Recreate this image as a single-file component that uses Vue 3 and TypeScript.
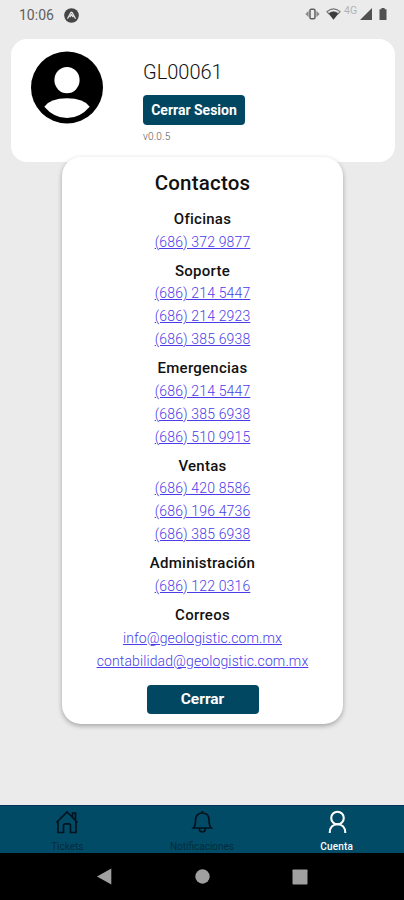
<script setup lang="ts">
interface ContactGroup {
  title: string
  scheme: 'tel' | 'mailto'
  entries: string[]
}

const groups: ContactGroup[] = [
  { title: 'Oficinas', scheme: 'tel', entries: ['(686) 372 9877'] },
  { title: 'Soporte', scheme: 'tel', entries: ['(686) 214 5447', '(686) 214 2923', '(686) 385 6938'] },
  { title: 'Emergencias', scheme: 'tel', entries: ['(686) 214 5447', '(686) 385 6938', '(686) 510 9915'] },
  { title: 'Ventas', scheme: 'tel', entries: ['(686) 420 8586', '(686) 196 4736', '(686) 385 6938'] },
  { title: 'Administración', scheme: 'tel', entries: ['(686) 122 0316'] },
  { title: 'Correos', scheme: 'mailto', entries: ['info@geologistic.com.mx', 'contabilidad@geologistic.com.mx'] },
]

const href = (group: ContactGroup, entry: string): string =>
  group.scheme === 'tel' ? `tel:${entry.replace(/\D/g, '')}` : `mailto:${entry}`
</script>

<template>
  <div class="screen">
    <header class="status">
      <span class="clock">10:06</span>
      <svg class="app-mark" width="15" height="15" viewBox="0 0 15 15">
        <circle cx="7.5" cy="7.5" r="7.3" fill="#454545" />
        <path d="M3.7 10.2 6.8 4.7Q7.5 3.8 8.2 4.7L11.3 10.2M6.1 8.7 7.5 6.6 8.9 8.7" fill="none" stroke="#e4e4e4" stroke-width="1.3" stroke-linecap="round" />
      </svg>
      <div class="indicators">
        <svg width="15" height="12" viewBox="0 0 15 12">
          <rect x="5" y="1.2" width="5" height="9.6" rx="1.2" fill="none" stroke="#606060" stroke-width="1.5" />
          <path d="M3.6 2.8.4 6 3.6 9.2ZM11.4 2.8 14.6 6 11.4 9.2Z" fill="#8a8a8a" />
        </svg>
        <svg class="wifi" width="15" height="12" viewBox="0 0 15 12">
          <path d="M.9 3.6Q7.5-1.8 14.1 3.6L12.3 5.7Q7.5 1.7 2.7 5.7Z" fill="none" stroke="#777" stroke-width="1.1" />
          <path d="M2.7 5.7Q7.5 1.8 12.3 5.7L7.5 11.8Z" fill="#3c3c3c" />
        </svg>
        <span class="network">4G</span>
        <svg class="signal" width="12" height="12" viewBox="0 0 12 12"><path d="M0 12 12 0V12Z" fill="#505050" /></svg>
        <svg class="battery" width="8" height="12" viewBox="0 0 8 12"><path d="M2.4 0H5.6V1.3H7.5V12H.5V1.3H2.4Z" fill="#505050" /></svg>
      </div>
    </header>

    <section class="profile">
      <svg class="avatar" width="72" height="73" viewBox="0 0 72 74" preserveAspectRatio="none">
        <ellipse cx="36" cy="37" rx="36" ry="36.5" />
        <ellipse cx="36" cy="29.5" rx="12.6" ry="13.3" fill="#fff" />
        <path d="M13.3 56.5Q19 48.2 36 48Q53 48.2 58.7 56.5Q49 68 36 68Q23 68 13.3 56.5Z" fill="#fff" />
      </svg>
      <div class="account">
        <span class="user">GL00061</span>
        <button class="button logout" type="button">Cerrar Sesion</button>
        <span class="version">v0.0.5</span>
      </div>
    </section>

    <section class="contacts">
      <h1>Contactos</h1>
      <div v-for="group in groups" :key="group.title" class="group">
        <h2>{{ group.title }}</h2>
        <a v-for="entry in group.entries" :key="entry" :class="group.scheme" :href="href(group, entry)">{{ entry }}</a>
      </div>
      <button class="button close" type="button">Cerrar</button>
    </section>

    <nav class="tabs">
      <div class="tab">
        <svg width="24" height="24" viewBox="0 0 24 24">
          <path d="M1.5 12.5 12 2 22.5 12.5M3 11V22.5H8.5V15.5Q8.5 13.8 10.2 13.8H13.8Q15.5 13.8 15.5 15.5V22.5H21V11M17.5 7V3H20.5V10" />
        </svg>
        <span>Tickets</span>
      </div>
      <div class="tab">
        <svg width="24" height="24" viewBox="0 0 24 24">
          <path d="M12.3 1V3M3.3 18C5.3 16 5.6 14 5.6 10C5.6 5.8 8 3 12.3 3S19 5.8 19 10C19 14 19.3 16 21.3 18ZM9.3 18.5Q9.3 22 12.3 22T15.3 18.5" />
        </svg>
        <span>Notificaciones</span>
      </div>
      <div class="tab active">
        <svg width="24" height="24" viewBox="0 0 24 24">
          <circle cx="12.5" cy="8" r="6.3" />
          <path d="M4.7 23C4.7 17.5 7.9 14.3 12.5 14.3S20.3 17.5 20.3 23" />
        </svg>
        <span>Cuenta</span>
      </div>
    </nav>

    <footer class="system">
      <svg width="15" height="17" viewBox="0 0 15 17"><path d="M0 8.5 14.3.5V16.5Z" /></svg>
      <svg width="15" height="15" viewBox="0 0 15 15"><circle cx="7.5" cy="7.5" r="7.2" /></svg>
      <svg width="16" height="16" viewBox="0 0 16 16"><rect x=".5" y=".5" width="15" height="15" rx=".7" /></svg>
    </footer>
  </div>
</template>

<style>
body {
  margin: 0;
}
</style>

<style scoped>
.screen {
  position: relative;
  display: flex;
  flex-direction: column;
  box-sizing: border-box;
  width: 404px;
  height: 900px;
  overflow: hidden;
  background: #ebebeb;
  color: #111;
  font-family: Roboto, "Liberation Sans", sans-serif;
}

.status {
  display: flex;
  align-items: center;
  flex: none;
  height: 30px;
  padding: 0 17px 0 19px;
}

.clock {
  width: 45px;
  color: #606060;
  font-size: 14px;
}

.indicators {
  display: flex;
  align-items: center;
  margin-left: auto;
  margin-top: -2px;
}

.wifi {
  margin-left: 6px;
}

.network {
  align-self: flex-start;
  width: 16px;
  margin: -3px 0 0 3px;
  color: #b4b4b4;
  font-size: 10.5px;
  line-height: 12px;
}

.battery {
  margin-left: 7px;
}

.profile {
  display: flex;
  flex: none;
  box-sizing: border-box;
  height: 123px;
  margin: 9px 9px 0 11px;
  padding: 12px 20px;
  border-radius: 16px;
  background: #fff;
}

.account {
  display: flex;
  flex-direction: column;
  align-items: flex-start;
  margin-left: 40px;
}

.user {
  margin-top: 8px;
  font-size: 20px;
  line-height: 27px;
  font-weight: 300;
}

.button {
  padding: 0;
  border: 0;
  border-radius: 4px;
  background: #024762;
  color: #fff;
  font-family: inherit;
  font-weight: 700;
}

.logout {
  width: 102px;
  height: 30px;
  margin-top: 9px;
  font-size: 14px;
}

.version {
  margin-top: 5px;
  color: #555;
  font-size: 10px;
  font-weight: 300;
  line-height: 14px;
  letter-spacing: 0.2px;
}

.contacts {
  position: absolute;
  top: 157px;
  left: 62px;
  display: flex;
  flex-direction: column;
  align-items: center;
  box-sizing: border-box;
  width: 281px;
  height: 567px;
  padding-top: 12px;
  border-radius: 19px;
  background: #fff;
  box-shadow: 0 2px 5px rgba(0, 0, 0, 0.3);
}

h1,
h2 {
  margin: 0;
  color: #111;
  font-weight: 500;
}

h1 {
  margin-bottom: 10.8px;
  font-size: 20.5px;
  line-height: 28px;
  letter-spacing: 0.2px;
}

.group {
  display: flex;
  flex-direction: column;
  align-items: center;
  margin-bottom: 6px;
}

h2,
a {
  line-height: 22.87px;
}

h2 {
  font-size: 15px;
  letter-spacing: 0.25px;
}

a {
  color: #4a3de8;
  font-size: 14px;
  font-weight: 300;
  letter-spacing: 0.15px;
}

.mailto {
  letter-spacing: 0.12px;
}

.close {
  width: 112px;
  height: 29px;
  margin-top: 6.5px;
  font-size: 15.5px;
}

.tabs {
  display: grid;
  grid-template-columns: repeat(3, 1fr);
  flex: none;
  box-sizing: border-box;
  height: 48px;
  margin-top: auto;
  border-top: 1px solid #06325a;
  background: #024b66;
}

.tab {
  display: flex;
  flex-direction: column;
  align-items: center;
  padding-top: 4px;
  color: #032b3d;
  font-size: 10px;
  line-height: 12px;
}

.tab svg {
  flex: none;
  fill: none;
  stroke: #03141f;
  stroke-width: 1.7;
}

.tab span {
  margin-top: 7px;
}

.active {
  color: #fff;
  font-weight: 500;
}

.active span {
  letter-spacing: 0.2px;
}

.active svg {
  stroke: #fff;
  stroke-width: 2.1;
}

.system {
  display: flex;
  align-items: center;
  justify-content: space-between;
  flex: none;
  box-sizing: border-box;
  height: 47px;
  padding: 0 96px 0 97px;
  background: #000;
  fill: #a0a0a0;
}
</style>
